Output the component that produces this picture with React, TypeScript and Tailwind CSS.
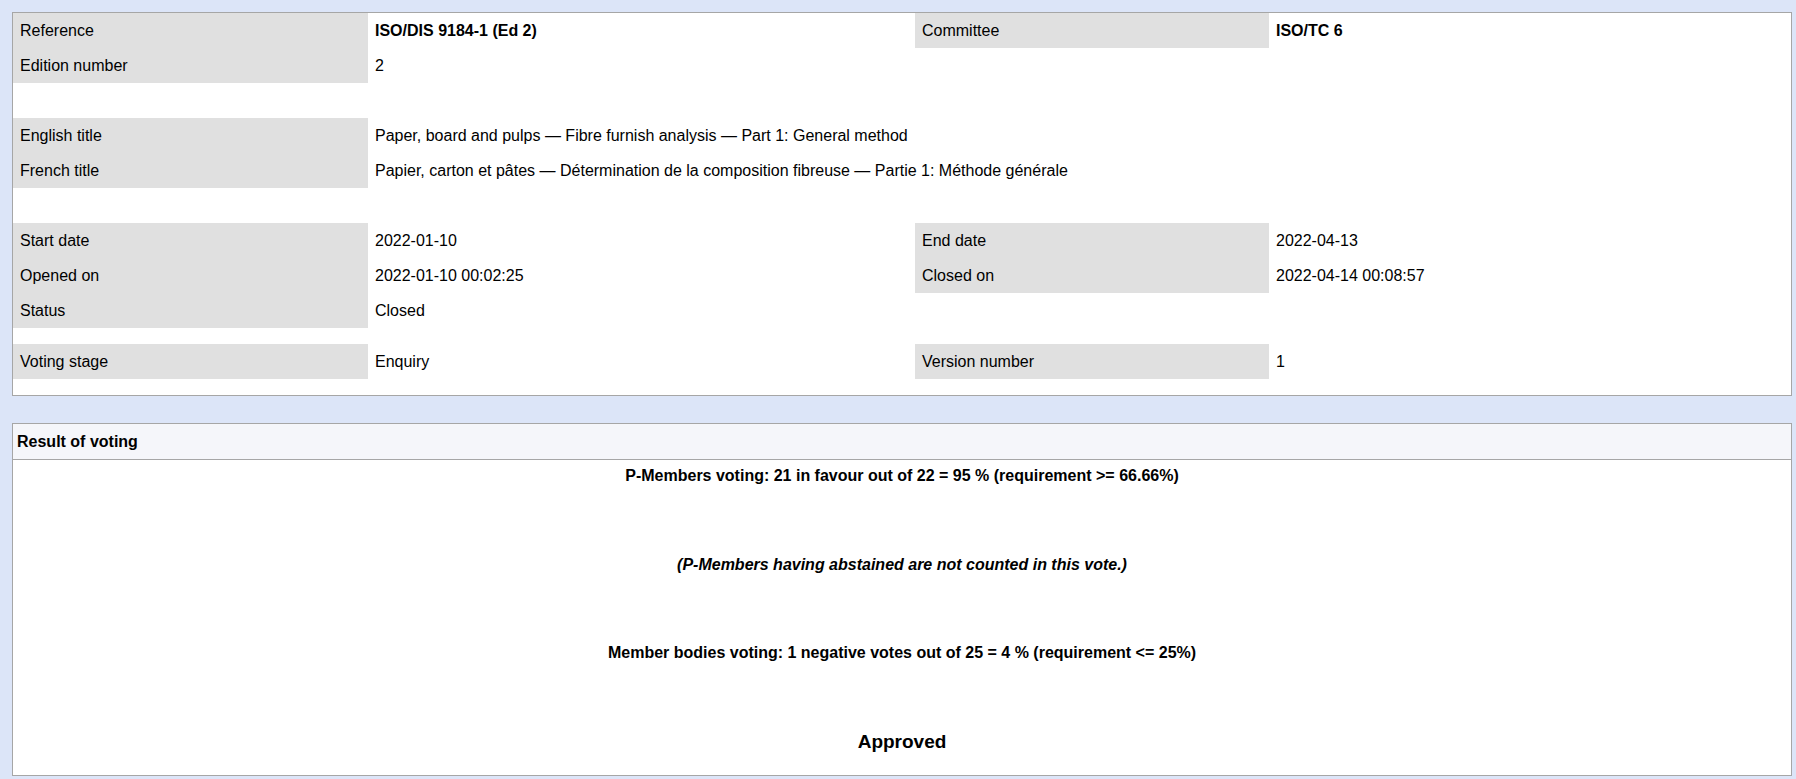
import React from "react";

const Label = ({ children }: { children?: React.ReactNode }) => (
  <div className="bg-[#e0e0e0] px-[7px] flex items-center h-full">{children}</div>
);
const Val = ({ children, bold }: { children?: React.ReactNode; bold?: boolean }) => (
  <div className={`px-[7px] flex items-center h-full ${bold ? "font-bold" : ""}`}>{children}</div>
);
const Empty = () => <div />;

export default function App() {
  return (
    <div
      className="min-h-[779px] bg-[#dce5f8] pt-[12px] pl-[12px] pr-[4px] pb-[2px] text-[16px] text-black"
      style={{ fontFamily: '"Liberation Sans", Arial, sans-serif' }}
    >
      <div className="border border-[#a6a6a6] bg-white pb-[16px]">
        <div className="grid grid-cols-[355px_547px_354px_1fr] auto-rows-[35px] leading-[18px]">
          <Label>Reference</Label>
          <Val bold>ISO/DIS 9184-1 (Ed 2)</Val>
          <Label>Committee</Label>
          <Val bold>ISO/TC 6</Val>

          <Label>Edition number</Label>
          <Val>2</Val>
          <Empty />
          <Empty />

          <Empty />
          <Empty />
          <Empty />
          <Empty />

          <Label>English title</Label>
          <div className="col-span-3 px-[7px] flex items-center">
            Paper, board and pulps — Fibre furnish analysis — Part 1: General method
          </div>

          <Label>French title</Label>
          <div className="col-span-3 px-[7px] flex items-center">
            Papier, carton et pâtes — Détermination de la composition fibreuse — Partie 1: Méthode générale
          </div>

          <Empty />
          <Empty />
          <Empty />
          <Empty />

          <Label>Start date</Label>
          <Val>2022-01-10</Val>
          <Label>End date</Label>
          <Val>2022-04-13</Val>

          <Label>Opened on</Label>
          <Val>2022-01-10 00:02:25</Val>
          <Label>Closed on</Label>
          <Val>2022-04-14 00:08:57</Val>

          <Label>Status</Label>
          <Val>Closed</Val>
          <Empty />
          <Empty />
        </div>
        <div className="grid grid-cols-[355px_547px_354px_1fr] h-[35px] mt-[16px] leading-[18px]">
          <Label>Voting stage</Label>
          <Val>Enquiry</Val>
          <Label>Version number</Label>
          <Val>1</Val>
        </div>
      </div>

      <div className="mt-[27px] border border-[#a6a6a6] bg-white">
        <div className="h-[36px] bg-[#f5f6fa] border-b border-[#a6a6a6] px-[4px] flex items-center font-bold leading-[18px]">
          Result of voting
        </div>
        <div className="flex flex-col items-center font-bold leading-[18px] h-[315px]">
          <div className="mt-[7px] h-[18px]">
            P-Members voting: 21 in favour out of 22 = 95 % (requirement &gt;= 66.66%)
          </div>
          <div className="mt-[71px] h-[18px] italic">
            (P-Members having abstained are not counted in this vote.)
          </div>
          <div className="mt-[70px] h-[18px]">
            Member bodies voting: 1 negative votes out of 25 = 4 % (requirement &lt;= 25%)
          </div>
          <div className="mt-[69px] h-[22px] leading-[22px] text-[19px]">Approved</div>
        </div>
      </div>
    </div>
  );
}
